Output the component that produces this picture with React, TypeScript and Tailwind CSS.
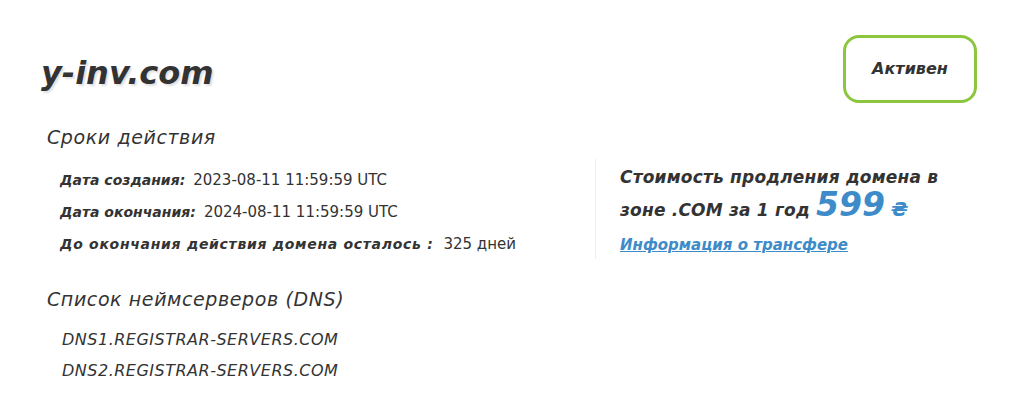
export default function App() {
  return (
    <div className="w-[1024px] h-[409px] bg-white text-[#333] font-['DejaVu_Sans',sans-serif] italic">
      <div className="flex items-start justify-between pl-[41px] pr-[47px] pt-[35px]">
        <h1 className="mt-[16px] text-[32px] leading-[44px] font-bold [text-shadow:2px_2px_2px_rgba(0,0,0,0.12)]">
          y-inv.com
        </h1>
        <div className="flex h-[68px] w-[134px] items-center justify-center rounded-[16px] border-[3px] border-[#8cc63f] text-[16px] font-bold">
          Активен
        </div>
      </div>

      <div className="flex pl-[47px] pt-[20px]">
        <div className="w-[548px]">
          <h2 className="text-[19px] leading-[28px] tracking-[0.6px]">Сроки действия</h2>
          <div className="mt-[17px] flex flex-col gap-[7px] pl-[13px] text-[14px] leading-[25px]">
            <div>
              <span className="font-bold">Дата создания:</span>
              <span className="not-italic ml-[8px] text-[15px]">2023-08-11 11:59:59 UTC</span>
            </div>
            <div>
              <span className="font-bold">Дата окончания:</span>
              <span className="not-italic ml-[8px] text-[15px]">2024-08-11 11:59:59 UTC</span>
            </div>
            <div>
              <span className="font-bold tracking-[0.7px]">До окончания действия домена осталось :</span>
              <span className="not-italic ml-[10px] text-[15px]">325 дней</span>
            </div>
          </div>
          <h2 className="mt-[28px] text-[19px] leading-[28px] tracking-[0.6px]">Список неймсерверов (DNS)</h2>
          <div className="mt-[14px] flex flex-col gap-[6px] pl-[15px] text-[16px] leading-[25px] tracking-[0.5px]">
            <div>DNS1.REGISTRAR-SERVERS.COM</div>
            <div>DNS2.REGISTRAR-SERVERS.COM</div>
          </div>
        </div>

        <div className="mt-[36px] h-[100px] border-l border-[#eeeeee] pl-[24px]">
          <p className="w-[360px] pt-[4px] text-[17px] leading-[28px] font-bold tracking-[0.2px]">
            Стоимость продления домена в<br />
            зоне .COM за 1 год{" "}
            <span className="text-[33px] leading-[28px] font-extrabold tracking-normal text-[#3d8cc9]">599</span>{" "}
            <span className="text-[20px] font-extrabold text-[#3d8cc9]">₴</span>
          </p>
          <a href="#" className="mt-[10px] block text-[15px] leading-[22px] font-bold text-[#3d8cc9] underline">
            Информация о трансфере
          </a>
        </div>
      </div>
    </div>
  );
}
